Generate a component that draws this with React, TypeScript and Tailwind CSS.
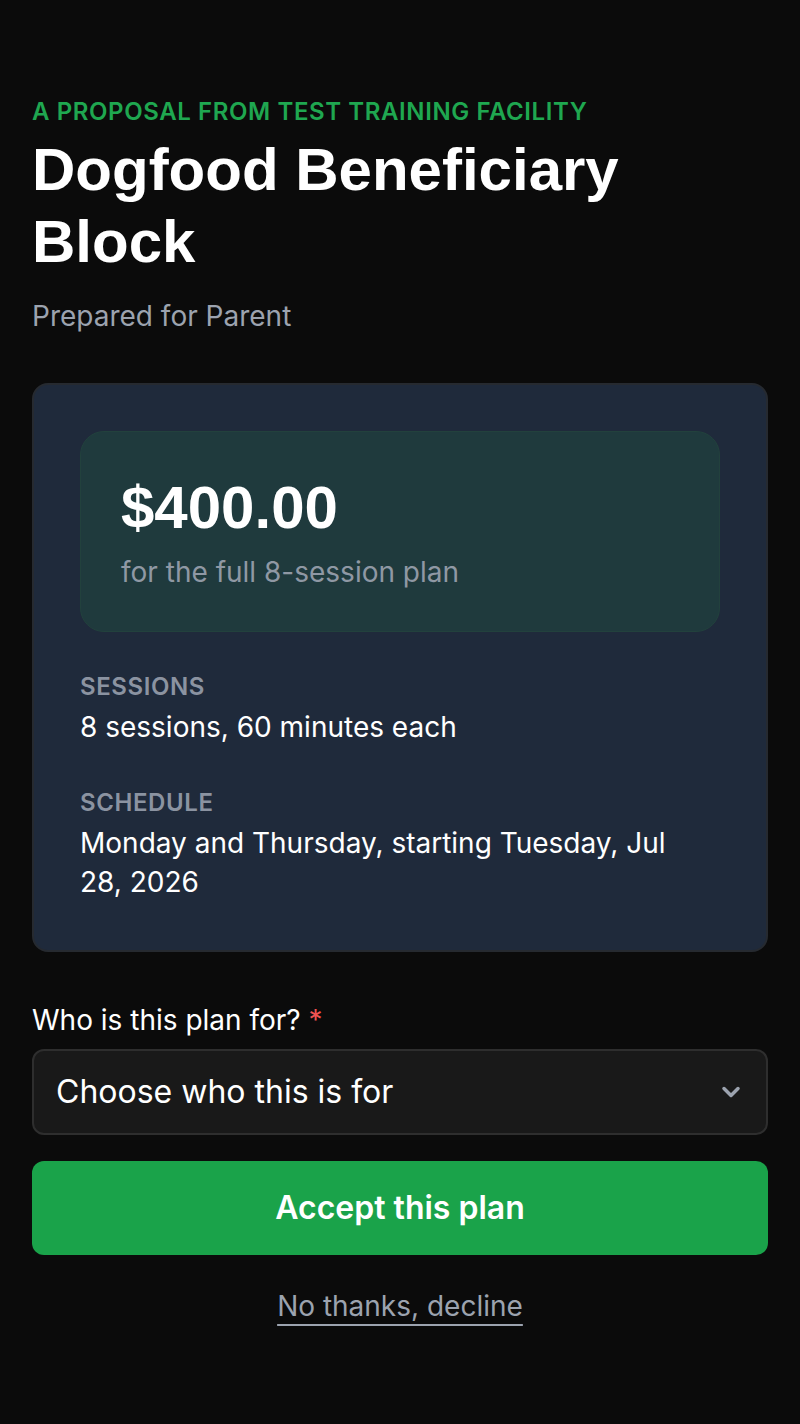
import { ChevronDown } from 'lucide-react'

const body = { fontFamily: 'Inter, "Noto Sans", sans-serif' }
const heading = { fontFamily: '"Liberation Sans", Arial, sans-serif' }

function Detail({ label, value }: { label: string; value: string }) {
  return (
    <div className="flex flex-col gap-[5px]">
      <div className="text-[24px] font-semibold uppercase leading-[32px] tracking-wide text-[#8b93a1]">{label}</div>
      <div className="text-[28px] leading-[39px] text-white">{value}</div>
    </div>
  )
}

export default function App() {
  return (
    <div className="min-h-[1424px] bg-[#0b0b0b] px-8 pt-[96px] pb-16" style={body}>
      <div className="text-[24px] font-semibold uppercase leading-[32px] tracking-wide text-[#1fa750]">
        A proposal from Test Training Facility
      </div>
      <h1 className="mt-[6px] text-[60px] font-bold leading-[72px] text-white" style={heading}>
        Dogfood Beneficiary Block
      </h1>
      <p className="mt-[17px] text-[28px] leading-[42px] text-[#9ca3af]">Prepared for Parent</p>

      <div className="mt-[46px] rounded-2xl border-2 border-[#262a30] bg-[#1f2a3b] px-[46px] pt-[46px] pb-[48px]">
        <div className="rounded-3xl border border-[#22413d] bg-[#1f3a3d] px-[40px] pt-[40px] pb-[38px]">
          <div className="text-[60px] font-bold leading-[72px] text-white" style={heading}>
            $400.00
          </div>
          <div className="mt-[7px] text-[28px] leading-[42px] text-[#8f98a4]">for the full 8-session plan</div>
        </div>

        <div className="mt-[39px] flex max-w-[620px] flex-col gap-[40px]">
          <Detail label="Sessions" value="8 sessions, 60 minutes each" />
          <Detail label="Schedule" value="Monday and Thursday, starting Tuesday, Jul 28, 2026" />
        </div>
      </div>

      <label className="mt-[47px] block text-[28px] leading-[42px] text-white">
        Who is this plan for? <span className="text-[#f05252]">*</span>
      </label>
      <div className="mt-[8px] flex h-[86px] items-center justify-between rounded-xl border-2 border-[#2e2e2e] bg-[#191919] pr-[21px] pl-[22px]">
        <span className="text-[32px] text-white">Choose who this is for</span>
        <ChevronDown className="h-[28px] w-[28px] text-[#9ca3af]" strokeWidth={3} />
      </div>

      <button
        type="button"
        className="mt-[26px] flex h-[94px] w-full items-center justify-center rounded-xl bg-[#1aa34a] text-[32px] font-semibold text-white"
      >
        Accept this plan
      </button>

      <div className="mt-[31px] text-center">
        <span className="text-[28px] leading-[40px] text-[#9ca3af] underline decoration-2 underline-offset-[8px]">
          No thanks, decline
        </span>
      </div>
    </div>
  )
}
